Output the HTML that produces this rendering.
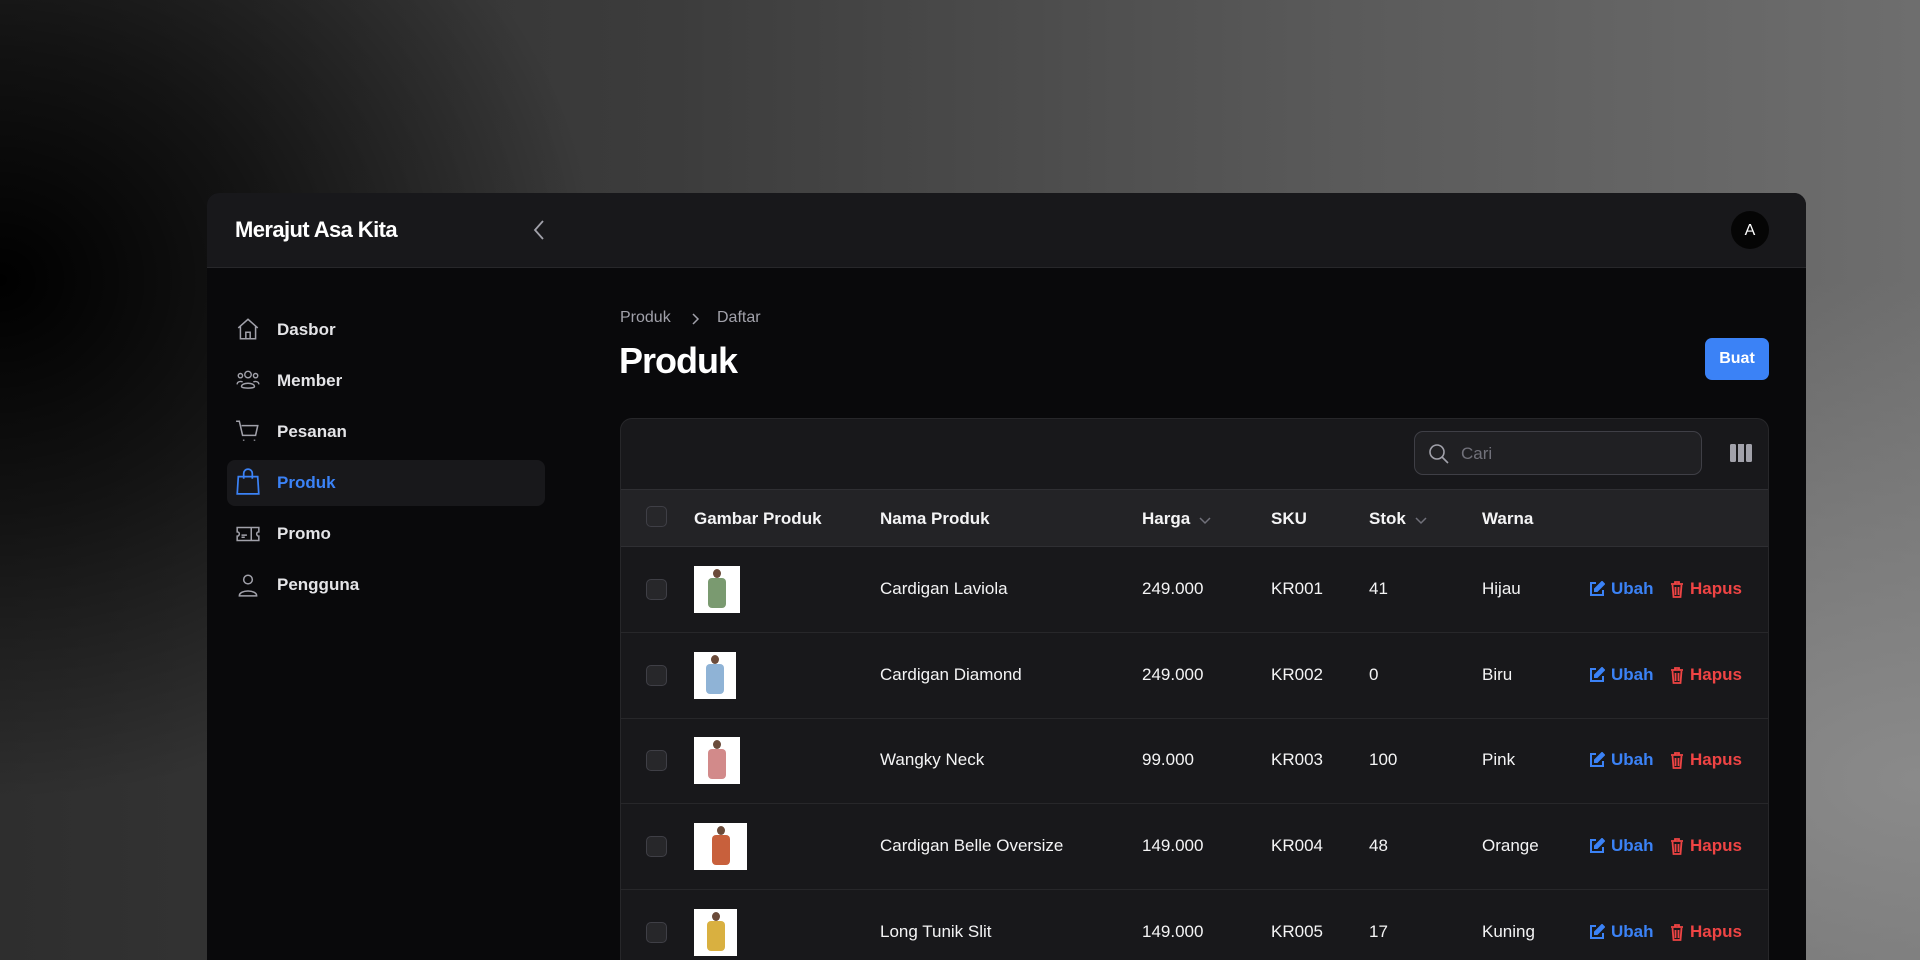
<!DOCTYPE html>
<html><head><meta charset="utf-8"><style>
*{box-sizing:border-box;margin:0;padding:0}
html{width:1920px;height:960px;overflow:hidden;background:#333}
body{width:1920px;height:960px;overflow:hidden;font-family:"Liberation Sans",sans-serif;position:relative;
background:radial-gradient(ellipse 900px 500px at 1920px 780px,#8a8a8a 0%,rgba(120,120,120,0) 100%),radial-gradient(ellipse 600px 520px at 0px 280px,#000 0%,rgba(0,0,0,0.6) 45%,rgba(0,0,0,0) 100%),linear-gradient(to right,#2e2e2e 0%,#3c3c3c 35%,#5a5a5a 70%,#6e6e6e 100%);}
.card{position:absolute;left:207px;top:193px;width:1599px;height:767px;background:#09090b;border-radius:12px 12px 0 0;overflow:hidden}
.top{position:absolute;left:0;top:0;width:100%;height:75px;background:#18181b;border-bottom:1px solid #27272a}
.logo{position:absolute;left:28px;top:24px;color:#fff;font-weight:bold;font-size:22px;letter-spacing:-0.6px}
.abs{position:absolute}
.nav{position:absolute;left:70px;color:#e4e4e7;font-weight:bold;font-size:17px}
.ic{position:absolute;left:28px}
.t{position:absolute;color:#f4f4f5;font-size:17px;white-space:nowrap}
.th{font-weight:bold}
.cb{position:absolute;left:439px;width:21px;height:21px;border:1.5px solid #3f3f46;border-radius:5px;background:#27272a}
.row{position:absolute;height:1px;width:1149px;background:#27272a}
.img{position:absolute;background:#fff;overflow:hidden}
.ub{color:#3b82f6;font-weight:bold}
.hp{color:#ef4444;font-weight:bold}
</style></head><body>
<div class="card">
 <div class="top">
  <div class="logo">Merajut Asa Kita</div>
  <svg class="abs" style="left:325px;top:26px" width="14" height="22" viewBox="0 0 14 22"><path d="M11 2L3 11l8 9" stroke="#a1a1aa" stroke-width="1.8" fill="none"/></svg>
  <div class="abs" style="left:1524px;top:18px;width:38px;height:38px;border-radius:50%;background:#050505;color:#fff;font-size:16px;text-align:center;line-height:40px">A</div>
 </div>
 <div class="abs" style="left:20px;top:267px;width:318px;height:46px;background:#18181b;border-radius:8px"></div>
 <svg class="ic" style="top:123px" width="26" height="26" viewBox="0 0 24 24" fill="none" stroke="#a1a1aa" stroke-width="1.4"><path d="M3 11l9-8 9 8M5 9.5V21h14V9.5M10 21v-6h4v6"/></svg>
 <div class="nav" style="top:127px">Dasbor</div>
 <svg class="ic" style="top:174px" width="26" height="26" viewBox="0 0 24 24" fill="none" stroke="#a1a1aa" stroke-width="1.3"><circle cx="12" cy="7" r="3"/><circle cx="5" cy="8" r="2"/><circle cx="19" cy="8" r="2"/><path d="M6 18c0-4 12-4 12 0 0 2-12 2-12 0zM2 16c0-3 4-3 5-2M22 16c0-3-4-3-5-2"/></svg>
 <div class="nav" style="top:178px">Member</div>
 <svg class="ic" style="top:225px" width="26" height="26" viewBox="0 0 24 24" fill="none" stroke="#a1a1aa" stroke-width="1.4"><path d="M1 3h3l3 13h12l2-9H6M8 20v1M18 20v1"/></svg>
 <div class="nav" style="top:229px">Pesanan</div>
 <svg class="ic" style="top:275px" width="26" height="28" viewBox="0 0 24 26" fill="none" stroke="#3b82f6" stroke-width="1.6"><path d="M3 8h18l1 16H2zM8 10V5a4 4 0 018 0v5"/></svg>
 <div class="nav" style="top:280px;color:#3b82f6">Produk</div>
 <svg class="ic" style="top:328px" width="26" height="26" viewBox="0 0 24 24" fill="none" stroke="#a1a1aa" stroke-width="1.4"><path d="M2 6h20v4a2 2 0 000 4v4H2v-4a2 2 0 000-4zM15 6v12M6 13h5M6 15h3"/></svg>
 <div class="nav" style="top:331px">Promo</div>
 <svg class="ic" style="top:379px" width="26" height="26" viewBox="0 0 24 24" fill="none" stroke="#a1a1aa" stroke-width="1.4"><circle cx="12" cy="7" r="4"/><path d="M4 22c0-6 16-6 16 0z"/></svg>
 <div class="nav" style="top:382px">Pengguna</div>
 <div class="t" style="left:413px;top:116px;color:#a1a1aa;font-size:16px">Produk</div>
 <svg class="abs" style="left:484px;top:119px" width="10" height="14" viewBox="0 0 10 14"><path d="M2 2l5 5-5 5" stroke="#a1a1aa" stroke-width="1.5" fill="none"/></svg>
 <div class="t" style="left:510px;top:116px;color:#a1a1aa;font-size:16px">Daftar</div>
 <div class="t" style="left:412px;top:147px;font-size:36px;font-weight:bold;color:#fff;letter-spacing:-1px">Produk</div>
 <div class="abs" style="left:1498px;top:145px;width:64px;height:42px;background:#3b82f6;border-radius:7px;color:#fff;font-weight:bold;font-size:16px;text-align:center;line-height:42px">Buat</div>
 <div class="abs" style="left:413px;top:225px;width:1149px;height:542px;background:#18181b;border:1px solid #27272a;border-bottom:none;border-radius:12px 12px 0 0;overflow:hidden">
  <div class="abs" style="left:0;top:70px;width:100%;height:58px;background:#232326;border-top:1px solid #2f2f33;border-bottom:1px solid #2f2f33"></div>
  <div class="abs" style="left:793px;top:12px;width:288px;height:44px;border:1px solid #3f3f46;border-radius:9px;background:#202023"></div>
  <svg class="abs" style="left:807px;top:24px" width="22" height="22" viewBox="0 0 22 22" fill="none" stroke="#a1a1aa" stroke-width="1.6"><circle cx="9" cy="9" r="7"/><path d="M14 14l6 6"/></svg>
  <div class="t" style="left:840px;top:25px;color:#71717a">Cari</div>
  <svg class="abs" style="left:1109px;top:25px" width="22" height="18" viewBox="0 0 22 18"><rect x="0" y="0" width="6" height="18" rx="1.5" fill="#a1a1aa"/><rect x="8" y="0" width="6" height="18" fill="#a1a1aa"/><rect x="16" y="0" width="6" height="18" rx="1.5" fill="#a1a1aa"/></svg>
 </div>
 <div class="cb" style="top:313px"></div>
 <div class="t th" style="left:487px;top:316px">Gambar Produk</div>
 <div class="t th" style="left:673px;top:316px">Nama Produk</div>
 <div class="t th" style="left:935px;top:316px">Harga</div>
 <svg class="abs" style="left:991px;top:320px" width="14" height="14" viewBox="0 0 14 14"><path d="M2 5l5 5 5-5" stroke="#71717a" stroke-width="1.5" fill="none"/></svg>
 <div class="t th" style="left:1064px;top:316px">SKU</div>
 <div class="t th" style="left:1162px;top:316px">Stok</div>
 <svg class="abs" style="left:1207px;top:320px" width="14" height="14" viewBox="0 0 14 14"><path d="M2 5l5 5 5-5" stroke="#71717a" stroke-width="1.5" fill="none"/></svg>
 <div class="t th" style="left:1275px;top:316px">Warna</div>
 <div id="rows"></div>
</div>
<script>
var d=[["Cardigan Laviola","249.000","KR001","41","Hijau",46,"#7a9a70"],["Cardigan Diamond","249.000","KR002","0","Biru",42,"#8fb3d6"],["Wangky Neck","99.000","KR003","100","Pink",46,"#d28a8a"],["Cardigan Belle Oversize","149.000","KR004","48","Orange",53,"#c8603c"],["Long Tunik Slit","149.000","KR005","17","Kuning",43,"#d9b040"]];
var h="",O=207,T=193;
d.forEach(function(r,i){var c=589+i*85.7-T,top=c-10;
h+='<div class="cb" style="left:'+(646-O)+'px;top:'+(c-10)+'px"></div>';
h+='<div class="img" style="left:'+(694-O)+'px;top:'+(c-23)+'px;width:'+r[5]+'px;height:47px"><div style="position:absolute;left:'+(r[5]/2-9)+'px;top:12px;width:18px;height:30px;background:'+r[6]+';border-radius:4px"></div><div style="position:absolute;left:'+(r[5]/2-4)+'px;top:3px;width:8px;height:9px;background:#6b4b3a;border-radius:50%"></div></div>';
var x=[880,1142,1271,1369,1482];
for(var k=0;k<5;k++)h+='<div class="t" style="left:'+(x[k]-O)+'px;top:'+top+'px">'+r[k]+'</div>';
h+='<svg class="abs" style="left:'+(1589-O)+'px;top:'+(c-8)+'px" width="16" height="16" viewBox="0 0 16 16" fill="none" stroke="#3b82f6" stroke-width="2"><path d="M7 2H2v12h12V9"/><path d="M13 1l2 2-7 7H6V8z" fill="#3b82f6"/></svg>';
h+='<div class="t ub" style="left:'+(1611-O)+'px;top:'+top+'px">Ubah</div>';
h+='<svg class="abs" style="left:'+(1670-O)+'px;top:'+(c-8)+'px" width="14" height="17" viewBox="0 0 14 17" fill="none" stroke="#ef4444" stroke-width="1.8"><path d="M1 3h12M5 3V1h4v2M2.5 4l1 12h7l1-12M5.5 6v8M8.5 6v8"/></svg>';
h+='<div class="t hp" style="left:'+(1690-O)+'px;top:'+top+'px">Hapus</div>';
if(i<4)h+='<div class="row" style="left:'+(620-O)+'px;top:'+(c+43)+'px"></div>';
});
document.getElementById('rows').innerHTML=h;
</script>
</body></html>
